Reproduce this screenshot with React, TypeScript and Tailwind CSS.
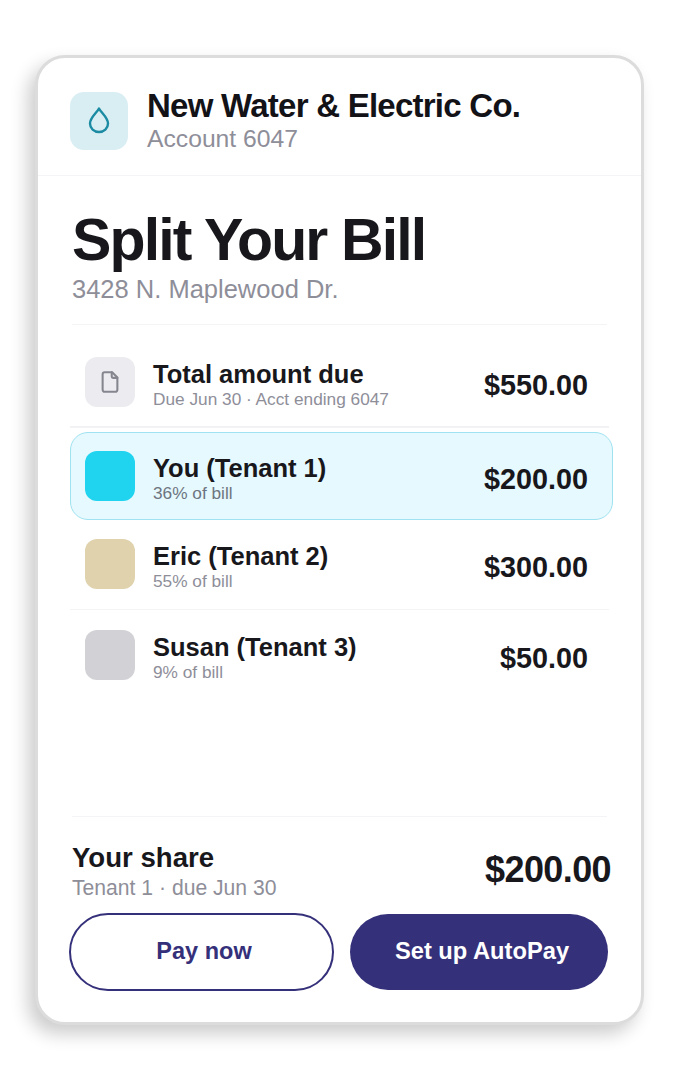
import React from "react";

const font = { fontFamily: '"Liberation Sans", Arial, sans-serif' };

function Row({ swatch, name, sub, amount, subClass = "text-[#8e8e99]", icon, className = "" }: { swatch: string; name: string; sub: string; amount: string; subClass?: string; icon?: React.ReactNode; className?: string }) {
  return (
    <div className={`flex items-center h-[50px] ${className}`}>
      <div className={`w-[50px] h-[50px] rounded-[12px] flex items-center justify-center shrink-0 ${swatch}`}>{icon}</div>
      <div className="ml-[18px] flex-1 flex flex-col pt-[4px]">
        <div className="text-[25.5px] leading-[30px] font-bold text-[#17171c]">{name}</div>
        <div className={`text-[17.25px] leading-[20px] ${subClass}`}>{sub}</div>
      </div>
      <div className="text-[28.8px] font-bold text-[#17171c] leading-none pt-[6px]">{amount}</div>
    </div>
  );
}

export default function App() {
  return (
    <div className="w-[680px] h-[1080px] bg-white pt-[55px] pl-[35px] overflow-hidden" style={font}>
      <div className="w-[609px] h-[970px] rounded-[30px] border-[3px] border-[#dcdcdc] bg-white shadow-[-7px_9px_18px_rgba(0,0,0,0.2)] flex flex-col">
        <div className="h-[118px] pt-[34px] pl-[32px] flex items-start border-b border-[#f4f4f6] shrink-0">
          <div className="w-[58px] h-[58px] rounded-[14px] bg-[#d9eef3] flex items-center justify-center">
            <svg width="24" height="28" viewBox="0 0 24 28" fill="none" stroke="#1b8ba3" strokeWidth="2.4" className="-mt-[2px]">
              <path d="M12 2.5 C14 6.5 21 11.5 21 17.5 C21 22.5 17 26 12 26 C7 26 3 22.5 3 17.5 C3 11.5 10 6.5 12 2.5 Z" strokeLinejoin="round" />
            </svg>
          </div>
          <div className="ml-[19px] -mt-[5px]">
            <div className="text-[33px] leading-[38px] font-bold text-[#121217] tracking-[-0.75px]">New Water &amp; Electric Co.</div>
            <div className="text-[24.7px] leading-[27px] text-[#8e8e99]">Account 6047</div>
          </div>
        </div>

        <div className="px-[34px] pt-[29px] shrink-0">
          <div className="text-[59px] leading-[70px] font-bold text-[#17171c] tracking-[-1.87px]">Split Your Bill</div>
          <div className="text-[25.5px] leading-[30px] -mt-[1px] text-[#8e8e99]">3428 N. Maplewood Dr.</div>
        </div>

        <div className="mx-[34px] mt-[20px] border-t border-[#f4f4f6]" />

        <div className="mt-[17px] mx-[32px] h-[86px] border-b-2 border-[#f2f2f4] pl-[15px] pr-[21px] pt-[15px]">
          <Row
            swatch="bg-[#ececf0]"
            name="Total amount due"
            sub="Due Jun 30 · Acct ending 6047"
            amount="$550.00"
            icon={
              <svg width="26" height="26" viewBox="0 0 24 24" fill="none" stroke="#85858f" strokeWidth="1.9" strokeLinecap="round" strokeLinejoin="round" className="-ml-[1px]">
                <path d="M14 3H7A1.8 1.8 0 0 0 5.2 4.8v14.4A1.8 1.8 0 0 0 7 21h10a1.8 1.8 0 0 0 1.8-1.8V7.8z" />
                <path d="M13.6 3v4a1.2 1.2 0 0 0 1.2 1.2h4" />
              </svg>
            }
          />
        </div>

        <div className="mt-[4px] ml-[32px] w-[543px] h-[88px] rounded-[18px] border border-[#9fe2f0] bg-[#e6f9fe] pl-[14px] pr-[24px] flex flex-col justify-center">
          <Row swatch="bg-[#20d4f0]" name="You (Tenant 1)" sub="36% of bill" amount="$200.00" subClass="text-[#6d7580]" />
        </div>

        <div className="mx-[32px] mt-[19px] pl-[15px] pr-[21px] h-[71px] border-b border-[#f4f4f6]">
          <Row swatch="bg-[#dfd2ac]" name="Eric (Tenant 2)" sub="55% of bill" amount="$300.00" />
        </div>

        <div className="mx-[32px] mt-[20px] pl-[15px] pr-[21px]">
          <Row swatch="bg-[#d2d2d6]" name="Susan (Tenant 3)" sub="9% of bill" amount="$50.00" />
        </div>

        <div className="mx-[34px] mt-[136px] border-t border-[#f4f4f6] flex items-start justify-between pt-[25px]">
          <div>
            <div className="text-[27.6px] leading-[32px] font-bold text-[#17171c]">Your share</div>
            <div className="text-[21.15px] leading-[26px] mt-[1px] text-[#8e8e99]">Tenant 1 · due Jun 30</div>
          </div>
          <div className="text-[36px] leading-[44px] font-bold text-[#17171c] tracking-[-0.6px] mt-[6px] -mr-[4px]">$200.00</div>
        </div>

        <div className="ml-[31px] mt-[12px] flex items-center">
          <div className="w-[265px] h-[78px] rounded-full border-2 border-[#35307a] flex items-center justify-center pl-[5px] text-[23.5px] font-bold text-[#35307a]">Pay now</div>
          <div className="ml-[16px] w-[258px] h-[76px] rounded-full bg-[#35307a] flex items-center justify-center pl-[6px] text-[23.7px] font-bold text-white">Set up AutoPay</div>
        </div>
      </div>
    </div>
  );
}
